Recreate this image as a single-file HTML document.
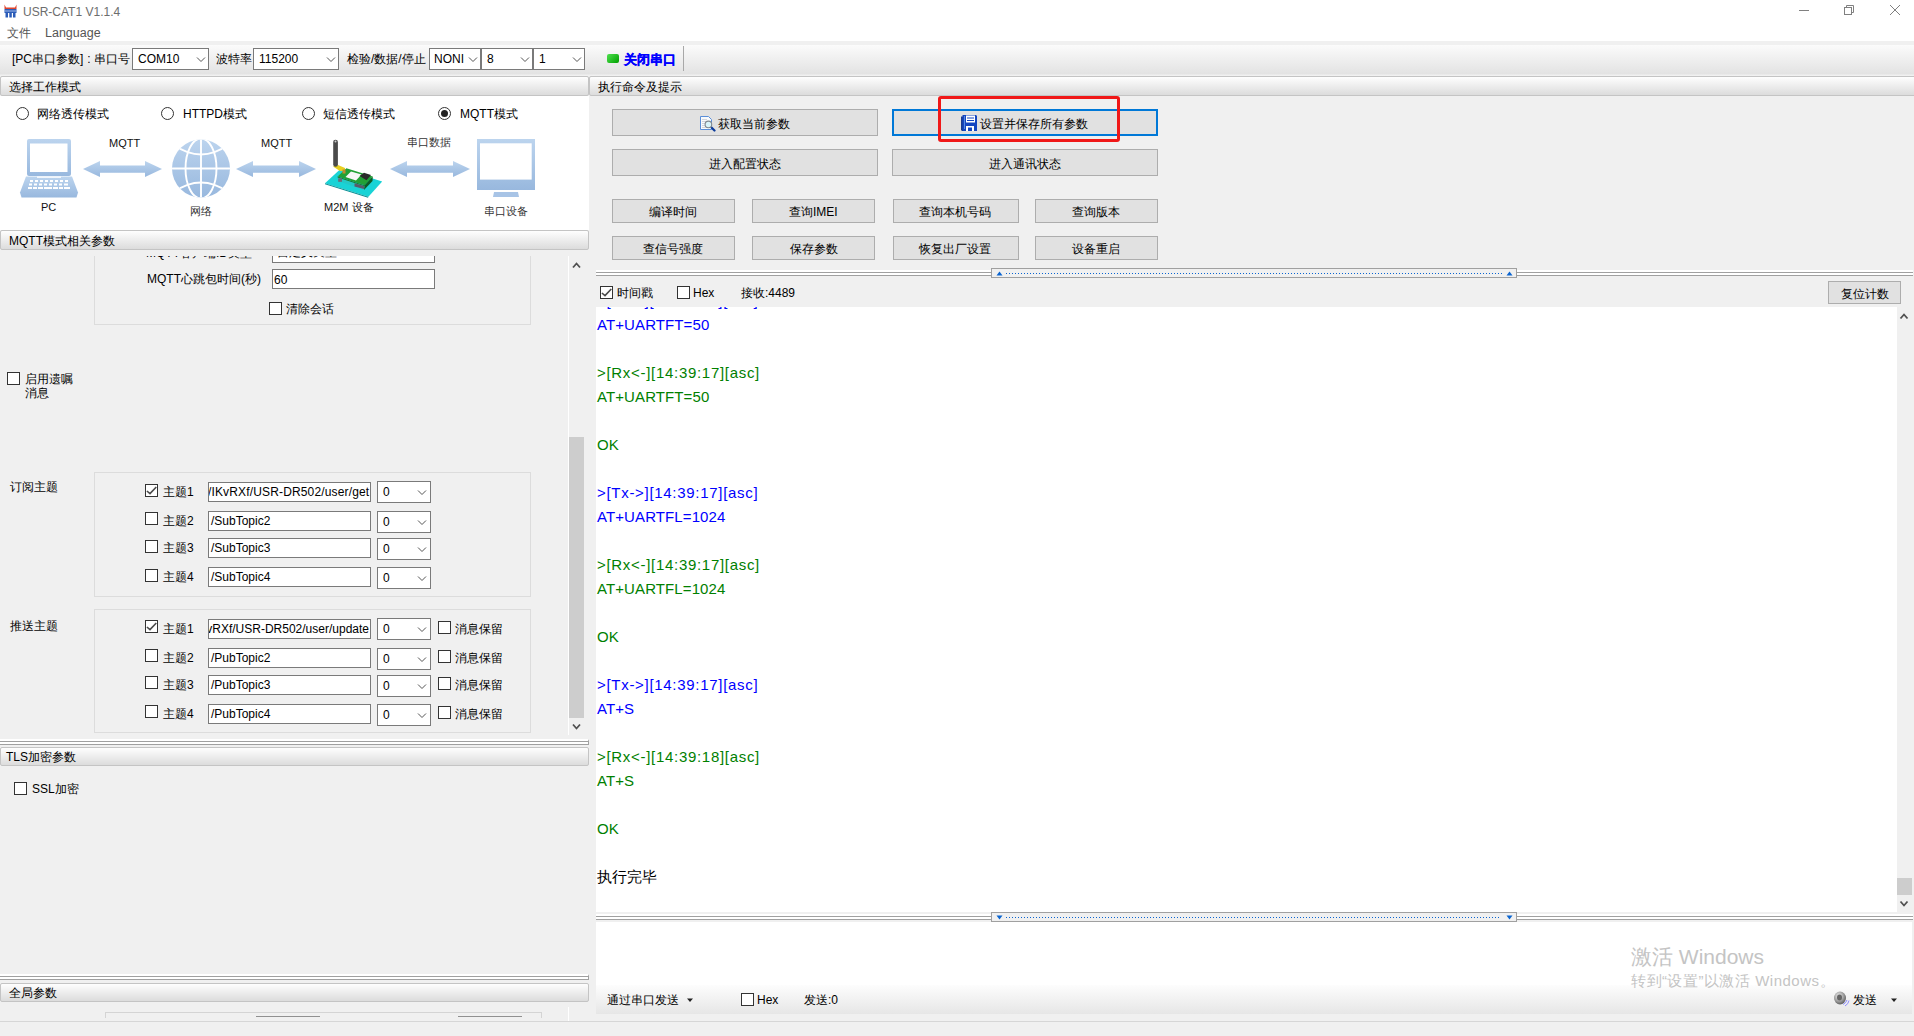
<!DOCTYPE html>
<html><head><meta charset="utf-8">
<style>
*{box-sizing:border-box;margin:0;padding:0}
html,body{width:1914px;height:1036px;overflow:hidden;background:#f0f0f0;font-family:"Liberation Sans",sans-serif;font-size:12px;color:#000}
.a{position:absolute}
.t{position:absolute;white-space:nowrap;line-height:1}
.hdr{position:absolute;height:19px;background:linear-gradient(#fefefe,#dcdcdc);border:1px solid #c4c4c4;border-radius:2px}
.btn{position:absolute;background:#e1e1e1;border:1px solid #adadad;text-align:center;font-size:12px}
.cb{position:absolute;width:13px;height:13px;border:1px solid #333;background:#fff}
.inp{position:absolute;background:#fff;border:1px solid #7a7a7a}
.combo{position:absolute;background:#fff;border:1px solid #7a7a7a}
.grp{position:absolute;border:1px solid #dcdcdc}
.split{position:absolute;height:4px;border-top:1px solid #a0a0a0;border-bottom:1px solid #a0a0a0;background:#fff}
.log{position:absolute;left:597px;font-size:15px;line-height:1;white-space:nowrap;letter-spacing:0.1px}
.ts{letter-spacing:0.7px}
.b{color:#0000ff}.g{color:#008000}
</style></head><body>
<!-- title bar -->
<div class="a" style="left:0;top:0;width:1914px;height:41px;background:#fff"></div>
<div id="title" class="t" style="left:23px;top:6px;font-size:12px;color:#6d6d6d">USR-CAT1 V1.1.4</div>
<svg class="a" style="left:4px;top:4px" width="13" height="14" viewBox="0 0 13 14"><path d="M0.5 0.5L2 3.5H11L12.5 0.5V5H0.5Z" fill="#e0442c"/><rect x="0.5" y="5" width="12" height="4" fill="#2b5cb8"/><rect x="1.5" y="9" width="2.5" height="4.5" fill="#2b5cb8"/><rect x="5.3" y="9" width="2.5" height="4.5" fill="#2b5cb8"/><rect x="9" y="9" width="2.5" height="4.5" fill="#2b5cb8"/><rect x="1" y="6.5" width="11" height="1" fill="#9fb8e8"/></svg>
<svg class="a" style="left:1795px;top:4px" width="110" height="14"><path d="M4 6.5H14" stroke="#808080" stroke-width="1"/><rect x="49.5" y="3.5" width="7" height="7" fill="none" stroke="#808080"/><path d="M51.5 3.5V1.5H58.5V8.5H56.5" fill="none" stroke="#808080"/><path d="M95 1L105 11M105 1L95 11" stroke="#808080" stroke-width="1"/></svg>
<div id="menu1" class="t" style="left:7px;top:27px;font-size:12px;color:#555">文件</div>
<div id="menu2" class="t" style="left:45px;top:27px;font-size:12.5px;color:#555">Language</div>

<!-- toolbar -->
<div class="a" style="left:0;top:45px;width:1914px;height:31px;background:linear-gradient(#fbfbfb,#e3e3e3 92%,#f4f4f4)"></div>

<div class="t" style="left:12px;top:53px;font-size:12px">[PC串口参数]<span style="padding:0 3px 0 4px">:</span>串口号</div>
<div class="combo" style="left:132px;top:48px;width:77px;height:22px"><span class="t" style="left:5px;top:4px;font-size:12px">COM10</span><svg class="a" style="left:63px;top:7px" width="10" height="7"><path d="M1 1.5L5 5.5L9 1.5" fill="none" stroke="#555" stroke-width="1"/></svg></div>
<div class="t" style="left:216px;top:53px">波特率</div>
<div class="combo" style="left:253px;top:48px;width:86px;height:22px"><span class="t" style="left:5px;top:4px">115200</span><svg class="a" style="left:72px;top:7px" width="10" height="7"><path d="M1 1.5L5 5.5L9 1.5" fill="none" stroke="#555" stroke-width="1"/></svg></div>
<div class="t" style="left:347px;top:53px">检验/数据/停止</div>
<div class="combo" style="left:429px;top:48px;width:52px;height:22px"><span class="t" style="left:4px;top:4px">NONI</span><svg class="a" style="left:38px;top:7px" width="10" height="7"><path d="M1 1.5L5 5.5L9 1.5" fill="none" stroke="#555" stroke-width="1"/></svg></div>
<div class="combo" style="left:481px;top:48px;width:52px;height:22px"><span class="t" style="left:5px;top:4px">8</span><svg class="a" style="left:38px;top:7px" width="10" height="7"><path d="M1 1.5L5 5.5L9 1.5" fill="none" stroke="#555" stroke-width="1"/></svg></div>
<div class="combo" style="left:533px;top:48px;width:52px;height:22px"><span class="t" style="left:5px;top:4px">1</span><svg class="a" style="left:38px;top:7px" width="10" height="7"><path d="M1 1.5L5 5.5L9 1.5" fill="none" stroke="#555" stroke-width="1"/></svg></div>
<div class="a" style="left:607px;top:54px;width:12px;height:9px;border-radius:2px;background:linear-gradient(135deg,#50e050,#00a000)"></div>
<div class="t" style="left:624px;top:53px;font-size:13px;font-weight:bold;-webkit-text-stroke:0.3px #0000ff;color:#0000ff">关闭串口</div>
<div class="a" style="left:683px;top:46px;width:1px;height:25px;background:#a8a8a8"></div>

<!-- left panel headers -->
<div class="hdr" style="left:0;top:76px;width:589px;height:20px"></div>
<div class="t" style="left:9px;top:81px">选择工作模式</div>
<div class="a" style="left:0;top:96px;width:589px;height:134px;background:#fff"></div>
<!-- radios -->
<div class="a" style="left:16px;top:107px;width:13px;height:13px;border:1px solid #333;border-radius:50%;background:#fff"></div>
<div class="t" style="left:37px;top:108px">网络透传模式</div>
<div class="a" style="left:161px;top:107px;width:13px;height:13px;border:1px solid #333;border-radius:50%;background:#fff"></div>
<div class="t" style="left:183px;top:108px">HTTPD模式</div>
<div class="a" style="left:302px;top:107px;width:13px;height:13px;border:1px solid #333;border-radius:50%;background:#fff"></div>
<div class="t" style="left:323px;top:108px">短信透传模式</div>
<div class="a" style="left:438px;top:107px;width:13px;height:13px;border:1px solid #333;border-radius:50%;background:#fff"><div class="a" style="left:2px;top:2px;width:7px;height:7px;border-radius:50%;background:#222"></div></div>
<div class="t" style="left:460px;top:108px">MQTT模式</div>
<!-- diagram -->
<svg class="a" style="left:0;top:96px" width="588" height="134" viewBox="0 96 588 134">
<defs><linearGradient id="lb" x1="0" y1="0" x2="0" y2="1"><stop offset="0" stop-color="#bcd4ee"/><stop offset="1" stop-color="#98b8de"/></linearGradient></defs>
<!-- laptop -->
<rect x="27" y="139" width="44" height="37" rx="2" fill="url(#lb)"/>
<rect x="30" y="143.5" width="37.5" height="28.5" fill="#fff"/>
<path d="M26 176.5H72L78 192.5L76.5 197.5H21.5L20 192.5Z" fill="url(#lb)"/>
<path d="M37 176.5H61V177.8H37Z" fill="#fff"/>
<g fill="#fff"><rect x="30" y="180" width="3" height="2"/><rect x="35" y="180" width="3" height="2"/><rect x="40" y="180" width="3" height="2"/><rect x="45" y="180" width="3" height="2"/><rect x="50" y="180" width="3" height="2"/><rect x="55" y="180" width="3" height="2"/><rect x="60" y="180" width="3" height="2"/><rect x="65" y="180" width="3" height="2"/>
<rect x="29" y="183.5" width="3" height="2"/><rect x="34" y="183.5" width="3" height="2"/><rect x="39" y="183.5" width="3" height="2"/><rect x="44" y="183.5" width="3" height="2"/><rect x="49" y="183.5" width="3" height="2"/><rect x="54" y="183.5" width="3" height="2"/><rect x="59" y="183.5" width="3" height="2"/><rect x="64" y="183.5" width="4" height="2"/>
<rect x="28" y="187" width="4" height="2"/><rect x="33" y="187" width="4" height="2"/><rect x="38" y="187" width="5" height="2"/><rect x="44" y="187" width="8" height="2"/><rect x="53" y="187" width="5" height="2"/><rect x="59" y="187" width="4" height="2"/><rect x="64" y="187" width="6" height="2"/></g>
<!-- arrows -->
<path d="M83 169L100 161V165.5H145V161L162 169L145 177V172.8H100V177Z" fill="url(#lb)"/>
<path d="M236 169L253 161V165.5H299V161L316 169L299 177V172.8H253V177Z" fill="url(#lb)"/>
<path d="M390 169L407 161V165.5H453V161L470 169L453 177V172.8H407V177Z" fill="url(#lb)"/>
<!-- globe -->
<clipPath id="gc"><circle cx="201" cy="168.5" r="29"/></clipPath>
<circle cx="201" cy="168.5" r="29" fill="url(#lb)"/>
<g clip-path="url(#gc)" fill="none" stroke="#fff" stroke-width="1.9">
<path d="M201 138V200"/><path d="M171 168.5H231"/>
<ellipse cx="201" cy="168.5" rx="15.5" ry="30"/>
<path d="M174 145Q201 164 228 145"/><path d="M174 192Q201 173 228 192"/>
</g>
<!-- M2M device -->
<path d="M325 183.3L341 168.5L382.2 181.5L368.4 196.8Z" fill="#19d3d6"/>
<path d="M325 183.3L368.4 196.8L368 197.8L325 184.3Z" fill="#0b8f95"/>
<path d="M337.6 176.4L346.4 168.3L372.8 176.4L364.6 185.2Z" fill="#22a035"/>
<path d="M337.6 176.4L364.6 185.2L364 190L338 181Z" fill="#22c8c8"/><path d="M337.6 176.4L364.6 185.2L364.6 186.2L337.6 177.4Z" fill="#1a7a2a"/>
<path d="M364.6 185.2L372.8 176.4L372.5 181L364 190Z" fill="#0e5a24"/>
<path d="M345.5 177L351 171.5L361.5 174.5L356 180.5Z" fill="#f6f6f6"/>
<path d="M359.6 176L364 172.7L371 175L366.5 180.2Z" fill="#2a2a2a"/>
<rect x="338.2" y="178.3" width="3.8" height="3.5" fill="#6a6a7a"/>
<path d="M354.5 183.3L364 186V189L354.5 186.5Z" fill="#5a5a6a"/>
<path d="M333 166.5L338 165L345 168L345 170.8L340 171Z" fill="#e8d020"/>
<rect x="342.5" y="169.5" width="3" height="4" fill="#c08a30"/>
<rect x="333.2" y="139.7" width="4.7" height="27" rx="2.3" fill="#4a4a4a"/>
<circle cx="335.5" cy="141.5" r="1" fill="#cfcfcf"/>
<!-- monitor -->
<rect x="477" y="139" width="58" height="51" fill="url(#lb)"/>
<rect x="480" y="143.3" width="51.7" height="36.3" fill="#fff"/>
<path d="M494 192H518L519 197H493Z" fill="#a8c4e6"/>
</svg>
<div class="t" style="left:109px;top:138px;font-size:11px;color:#111">MQTT</div>
<div class="t" style="left:261px;top:138px;font-size:11px;color:#111">MQTT</div>
<div class="t" style="left:407px;top:137px;font-size:11px;color:#333;font-family:'Liberation Serif',serif">串口数据</div>
<div class="t" style="left:41px;top:202px;font-size:11px;color:#111">PC</div>
<div class="t" style="left:190px;top:206px;font-size:11px;color:#333;font-family:'Liberation Serif',serif">网络</div>
<div class="t" style="left:324px;top:202px;font-size:11px;color:#111">M2M 设备</div>
<div class="t" style="left:484px;top:206px;font-size:11px;color:#333;font-family:'Liberation Serif',serif">串口设备</div>

<div class="hdr" style="left:0;top:230px;width:589px;height:20px"></div>
<div class="t" style="left:9px;top:235px">MQTT模式相关参数</div>

<!-- MQTT params scroll viewport -->
<div class="a" style="left:0;top:256px;width:568px;height:484px;overflow:hidden"><div class="a" style="left:0;top:-256px;width:568px;height:1036px">
<div class="grp" style="left:94px;top:150px;width:437px;height:175px"></div>
<div class="t" style="left:146px;top:247px">MQTT客户端ID类型</div>
<div class="inp" style="left:272px;top:243px;width:163px;height:20px"><span class="t" style="left:4px;top:2px">自定义类型</span></div>
<div class="t" style="left:147px;top:273px">MQTT心跳包时间(秒)</div>
<div class="inp" style="left:272px;top:269px;width:163px;height:20px"><span class="t" style="left:1px;top:4px">60</span></div>
<div class="cb" style="left:269px;top:302px"></div>
<div class="t" style="left:286px;top:303px">清除会话</div>

<div class="cb" style="left:7px;top:372px"></div>
<div class="t" style="left:25px;top:373px">启用遗嘱</div>
<div class="t" style="left:25px;top:387px">消息</div>

<div class="t" style="left:10px;top:481px">订阅主题</div>
<div class="grp" style="left:94px;top:472px;width:437px;height:125px"></div>
<div class="t" style="left:10px;top:620px">推送主题</div>
<div class="grp" style="left:94px;top:609px;width:437px;height:124px"></div>
<div class="cb" style="left:145px;top:484px"><svg class="a" style="left:0;top:0" width="11" height="11"><path d="M0.9 6L4 8.6L10.3 2" fill="none" stroke="#4a4a4a" stroke-width="1.6"/></svg></div>
<div class="t" style="left:163px;top:486px">主题1</div>
<div class="inp" style="left:208px;top:482px;width:163px;height:20px;overflow:hidden"><span class="t tp" style="left:-1px;top:3px;letter-spacing:0.15px">/IKvRXf/USR-DR502/user/get</span></div>
<div class="combo" style="left:377px;top:481px;width:54px;height:22px"><span class="t" style="left:5px;top:4px">0</span><svg class="a" style="left:39px;top:7px" width="10" height="7"><path d="M1 1.5L5 5.5L9 1.5" fill="none" stroke="#555" stroke-width="1"/></svg></div>
<div class="cb" style="left:145px;top:512px"></div>
<div class="t" style="left:163px;top:515px">主题2</div>
<div class="inp" style="left:208px;top:511px;width:163px;height:20px;overflow:hidden"><span class="t tp" style="left:2px;top:3px">/SubTopic2</span></div>
<div class="combo" style="left:377px;top:511px;width:54px;height:22px"><span class="t" style="left:5px;top:4px">0</span><svg class="a" style="left:39px;top:7px" width="10" height="7"><path d="M1 1.5L5 5.5L9 1.5" fill="none" stroke="#555" stroke-width="1"/></svg></div>
<div class="cb" style="left:145px;top:540px"></div>
<div class="t" style="left:163px;top:542px">主题3</div>
<div class="inp" style="left:208px;top:538px;width:163px;height:20px;overflow:hidden"><span class="t tp" style="left:2px;top:3px">/SubTopic3</span></div>
<div class="combo" style="left:377px;top:538px;width:54px;height:22px"><span class="t" style="left:5px;top:4px">0</span><svg class="a" style="left:39px;top:7px" width="10" height="7"><path d="M1 1.5L5 5.5L9 1.5" fill="none" stroke="#555" stroke-width="1"/></svg></div>
<div class="cb" style="left:145px;top:569px"></div>
<div class="t" style="left:163px;top:571px">主题4</div>
<div class="inp" style="left:208px;top:567px;width:163px;height:20px;overflow:hidden"><span class="t tp" style="left:2px;top:3px">/SubTopic4</span></div>
<div class="combo" style="left:377px;top:567px;width:54px;height:22px"><span class="t" style="left:5px;top:4px">0</span><svg class="a" style="left:39px;top:7px" width="10" height="7"><path d="M1 1.5L5 5.5L9 1.5" fill="none" stroke="#555" stroke-width="1"/></svg></div>
<div class="cb" style="left:145px;top:620px"><svg class="a" style="left:0;top:0" width="11" height="11"><path d="M0.9 6L4 8.6L10.3 2" fill="none" stroke="#4a4a4a" stroke-width="1.6"/></svg></div>
<div class="t" style="left:163px;top:623px">主题1</div>
<div class="inp" style="left:208px;top:619px;width:163px;height:20px;overflow:hidden"><span class="t tp" style="right:1px;top:3px">KvRXf/USR-DR502/user/update</span></div>
<div class="combo" style="left:377px;top:618px;width:54px;height:22px"><span class="t" style="left:5px;top:4px">0</span><svg class="a" style="left:39px;top:7px" width="10" height="7"><path d="M1 1.5L5 5.5L9 1.5" fill="none" stroke="#555" stroke-width="1"/></svg></div>
<div class="cb" style="left:438px;top:621px"></div>
<div class="t" style="left:455px;top:623px">消息保留</div>
<div class="cb" style="left:145px;top:649px"></div>
<div class="t" style="left:163px;top:652px">主题2</div>
<div class="inp" style="left:208px;top:648px;width:163px;height:20px;overflow:hidden"><span class="t tp" style="left:2px;top:3px">/PubTopic2</span></div>
<div class="combo" style="left:377px;top:648px;width:54px;height:22px"><span class="t" style="left:5px;top:4px">0</span><svg class="a" style="left:39px;top:7px" width="10" height="7"><path d="M1 1.5L5 5.5L9 1.5" fill="none" stroke="#555" stroke-width="1"/></svg></div>
<div class="cb" style="left:438px;top:650px"></div>
<div class="t" style="left:455px;top:652px">消息保留</div>
<div class="cb" style="left:145px;top:676px"></div>
<div class="t" style="left:163px;top:679px">主题3</div>
<div class="inp" style="left:208px;top:675px;width:163px;height:20px;overflow:hidden"><span class="t tp" style="left:2px;top:3px">/PubTopic3</span></div>
<div class="combo" style="left:377px;top:675px;width:54px;height:22px"><span class="t" style="left:5px;top:4px">0</span><svg class="a" style="left:39px;top:7px" width="10" height="7"><path d="M1 1.5L5 5.5L9 1.5" fill="none" stroke="#555" stroke-width="1"/></svg></div>
<div class="cb" style="left:438px;top:677px"></div>
<div class="t" style="left:455px;top:679px">消息保留</div>
<div class="cb" style="left:145px;top:705px"></div>
<div class="t" style="left:163px;top:708px">主题4</div>
<div class="inp" style="left:208px;top:704px;width:163px;height:20px;overflow:hidden"><span class="t tp" style="left:2px;top:3px">/PubTopic4</span></div>
<div class="combo" style="left:377px;top:704px;width:54px;height:22px"><span class="t" style="left:5px;top:4px">0</span><svg class="a" style="left:39px;top:7px" width="10" height="7"><path d="M1 1.5L5 5.5L9 1.5" fill="none" stroke="#555" stroke-width="1"/></svg></div>
<div class="cb" style="left:438px;top:706px"></div>
<div class="t" style="left:455px;top:708px">消息保留</div>
</div></div>
<!-- left scrollbar -->
<div class="a" style="left:568px;top:256px;width:1px;height:479px;background:#fff"></div>
<svg class="a" style="left:572px;top:261px" width="9" height="8"><path d="M1 6.5L4.5 2.5L8 6.5" fill="none" stroke="#505050" stroke-width="1.8"/></svg>
<div class="a" style="left:569px;top:437px;width:15px;height:281px;background:#cdcdcd"></div>
<svg class="a" style="left:572px;top:723px" width="9" height="8"><path d="M1 1.5L4.5 5.5L8 1.5" fill="none" stroke="#505050" stroke-width="1.8"/></svg>
<!-- left splitters -->
<div class="a" style="left:0;top:739px;width:589px;height:6px;border-top:2px solid #fff;border-bottom:1px solid #a0a0a0;background:#fff;border-right:1px solid #a0a0a0"><div class="a" style="left:0;top:0;width:588px;height:1px;background:#a0a0a0"></div></div>
<div class="hdr" style="left:0;top:747px;width:589px"></div>
<div class="t" style="left:6px;top:751px">TLS加密参数</div>
<div class="cb" style="left:14px;top:782px"></div>
<div class="t" style="left:32px;top:783px">SSL加密</div>
<div class="a" style="left:0;top:974px;width:589px;height:6px;border-top:2px solid #fff;border-bottom:1px solid #a0a0a0;background:#fff;border-right:1px solid #a0a0a0"><div class="a" style="left:0;top:0;width:588px;height:1px;background:#a0a0a0"></div></div>
<div class="hdr" style="left:0;top:983px;width:589px"></div>
<div class="t" style="left:9px;top:987px">全局参数</div>
<div class="a" style="left:105px;top:1012px;width:437px;height:6px;border:1px solid #d4d4d4;border-bottom:none"></div>
<div class="a" style="left:256px;top:1016px;width:64px;height:1px;background:#909090"></div>
<div class="a" style="left:458px;top:1016px;width:64px;height:1px;background:#909090"></div>
<div class="a" style="left:568px;top:1007px;width:1px;height:14px;background:#fff"></div>

<!-- right panel header -->
<div class="hdr" style="left:589px;top:76px;width:1330px;height:20px"></div>
<div class="t" style="left:598px;top:81px">执行命令及提示</div>

<!-- buttons -->
<div class="btn" style="left:612px;top:109px;width:266px;height:27px"></div>
<svg class="a" style="left:699px;top:115px" width="17" height="17" viewBox="0 0 17 17"><path d="M1.5 1.5H9.5L12.5 4.5V14.5H1.5Z" fill="#f8fafc" stroke="#5a8ed8"/><path d="M3 4.5H8M3 6.5H10M3 8.5H6M3 10.5H6M3 12.5H6" stroke="#c8ccd4" stroke-width="0.8"/><path d="M12.5 12.5L15.5 15.5" stroke="#0b3a9a" stroke-width="2.2" stroke-linecap="round"/><circle cx="9.4" cy="9.4" r="3.3" fill="#d8f4fa" stroke="#808890" stroke-width="1.1"/></svg>
<div class="t" style="left:718px;top:118px">获取当前参数</div>
<div class="btn" style="left:892px;top:109px;width:266px;height:27px;border:2px solid #0078d7"></div>
<svg class="a" style="left:961px;top:115px" width="17" height="17" viewBox="0 0 17 17"><path d="M0 1.5H2V15H15V16H1L0 15Z" fill="#1a3a90"/><path d="M1.5 0H15L16 1V16H2.5L1.5 15Z" fill="#1446c0"/><path d="M3 1H4V14H3Z" fill="#5a8ae0"/><rect x="5" y="0.5" width="9" height="7" fill="#fff"/><path d="M6 3H13M6 5.5H13" stroke="#1446c0" stroke-width="1"/><rect x="5" y="11" width="8" height="5" fill="#fff"/><rect x="7" y="12.5" width="4" height="3.5" fill="#1446c0"/></svg>
<div class="t" style="left:980px;top:118px">设置并保存所有参数</div>
<div class="a" style="left:938px;top:96px;width:182px;height:46px;border:3px solid #f01818;border-radius:3px"></div>
<div class="btn" style="left:612px;top:149px;width:266px;height:27px"></div>
<div class="t" style="left:709px;top:158px">进入配置状态</div>
<div class="btn" style="left:892px;top:149px;width:266px;height:27px"></div>
<div class="t" style="left:989px;top:158px">进入通讯状态</div>
<div class="btn" style="left:612px;top:199px;width:123px;height:24px"></div>
<div class="t" style="left:649px;top:206px">编译时间</div>
<div class="btn" style="left:752px;top:199px;width:123px;height:24px"></div>
<div class="t" style="left:789px;top:206px">查询IMEI</div>
<div class="btn" style="left:893px;top:199px;width:126px;height:24px"></div>
<div class="t" style="left:919px;top:206px">查询本机号码</div>
<div class="btn" style="left:1035px;top:199px;width:123px;height:24px"></div>
<div class="t" style="left:1072px;top:206px">查询版本</div>
<div class="btn" style="left:612px;top:236px;width:123px;height:24px"></div>
<div class="t" style="left:643px;top:243px">查信号强度</div>
<div class="btn" style="left:752px;top:236px;width:123px;height:24px"></div>
<div class="t" style="left:790px;top:243px">保存参数</div>
<div class="btn" style="left:893px;top:236px;width:126px;height:24px"></div>
<div class="t" style="left:919px;top:243px">恢复出厂设置</div>
<div class="btn" style="left:1035px;top:236px;width:123px;height:24px"></div>
<div class="t" style="left:1072px;top:243px">设备重启</div>

<!-- top splitter -->
<div class="a" style="left:596px;top:270px;width:1317px;height:2px;background:#fff"></div>
<div class="a" style="left:596px;top:272px;width:1317px;height:4px;background:#fff;border-top:1px solid #a0a0a0;border-bottom:1px solid #a0a0a0"></div>
<div class="a" style="left:991px;top:268px;width:526px;height:10px;background:#f0f0f0;border:1px solid #a0a0a0"></div>
<svg class="a" style="left:996px;top:271px" width="8" height="5"><path d="M0.5 4.5L3.5 0.5L6.5 4.5Z" fill="#0a64d0"/></svg>
<svg class="a" style="left:1506px;top:271px" width="8" height="5"><path d="M0.5 4.5L3.5 0.5L6.5 4.5Z" fill="#0a64d0"/></svg>
<div class="a" style="left:1006px;top:273px;width:496px;height:1px;background-image:linear-gradient(90deg,#0a64d0 1px,transparent 1px);background-size:3px 1px"></div>

<!-- checkbox row -->
<div class="cb" style="left:600px;top:286px"><svg class="a" style="left:0;top:0" width="11" height="11"><path d="M0.9 6L4 8.6L10.3 2" fill="none" stroke="#4a4a4a" stroke-width="1.6"/></svg></div>
<div class="t" style="left:617px;top:287px">时间戳</div>
<div class="cb" style="left:677px;top:286px"></div>
<div class="t" style="left:693px;top:287px">Hex</div>
<div class="t" style="left:741px;top:287px">接收:4489</div>
<div class="btn" style="left:1828px;top:281px;width:73px;height:23px"></div>
<div class="t" style="left:1841px;top:288px">复位计数</div>

<!-- log area -->
<div class="a" style="left:596px;top:307px;width:1301px;height:605px;background:#fff"></div>
<div class="a" style="left:596px;top:307px;width:1301px;height:605px;overflow:hidden"><div class="a" style="left:-596px;top:-307px;width:1914px;height:1036px">
<div class="log b ts" style="top:293px">&gt;[Tx-&gt;][14:39:17][asc]</div>
<div class="log b" style="top:317px">AT+UARTFT=50</div>
<div class="log g ts" style="top:365px">&gt;[Rx&lt;-][14:39:17][asc]</div>
<div class="log g" style="top:389px">AT+UARTFT=50</div>
<div class="log g" style="top:437px">OK</div>
<div class="log b ts" style="top:485px">&gt;[Tx-&gt;][14:39:17][asc]</div>
<div class="log b" style="top:509px">AT+UARTFL=1024</div>
<div class="log g ts" style="top:557px">&gt;[Rx&lt;-][14:39:17][asc]</div>
<div class="log g" style="top:581px">AT+UARTFL=1024</div>
<div class="log g" style="top:629px">OK</div>
<div class="log b ts" style="top:677px">&gt;[Tx-&gt;][14:39:17][asc]</div>
<div class="log b" style="top:701px">AT+S</div>
<div class="log g ts" style="top:749px">&gt;[Rx&lt;-][14:39:18][asc]</div>
<div class="log g" style="top:773px">AT+S</div>
<div class="log g" style="top:821px">OK</div>
<div class="log" style="top:869px;color:#000">执行完毕</div>
</div></div>
<!-- log scrollbar -->
<div class="a" style="left:1897px;top:307px;width:15px;height:605px;background:#f0f0f0"></div>
<svg class="a" style="left:1899px;top:312px" width="11" height="8"><path d="M1.5 6.5L5 2.5L8.5 6.5" fill="none" stroke="#505050" stroke-width="1.8"/></svg>
<div class="a" style="left:1897px;top:878px;width:15px;height:17px;background:#cdcdcd"></div>
<svg class="a" style="left:1899px;top:900px" width="11" height="8"><path d="M1.5 1.5L5 5.5L8.5 1.5" fill="none" stroke="#505050" stroke-width="1.8"/></svg>
<!-- bottom splitter -->
<div class="a" style="left:596px;top:912px;width:1317px;height:10px;background:#f0f0f0"></div><div class="a" style="left:596px;top:914px;width:1317px;height:2px;background:#fff"></div><div class="a" style="left:596px;top:916px;width:1317px;height:4px;background:#fff;border-top:1px solid #a0a0a0;border-bottom:1px solid #a0a0a0"></div>
<div class="a" style="left:991px;top:912px;width:526px;height:10px;background:#f0f0f0;border:1px solid #a0a0a0"></div>
<svg class="a" style="left:996px;top:915px" width="8" height="5"><path d="M0.5 0.5L3.5 4.5L6.5 0.5Z" fill="#0a64d0"/></svg>
<svg class="a" style="left:1506px;top:915px" width="8" height="5"><path d="M0.5 0.5L3.5 4.5L6.5 0.5Z" fill="#0a64d0"/></svg>
<div class="a" style="left:1006px;top:917px;width:494px;height:1px;background-image:linear-gradient(90deg,#0a64d0 1px,transparent 1px);background-size:3px 1px"></div>
<div class="a" style="left:596px;top:922px;width:1316px;height:63px;background:#fff"></div>
<div class="a" style="left:596px;top:985px;width:1316px;height:29px;background:linear-gradient(#fdfdfd,#e6e6e6)"></div>
<div class="a" style="left:0;top:1021px;width:1914px;height:1px;background:#d6d6d6"></div>
<div class="t" style="left:607px;top:994px">通过串口发送</div>
<svg class="a" style="left:687px;top:998px" width="7" height="5"><path d="M0 0.5H6L3 4Z" fill="#222"/></svg>
<div class="cb" style="left:741px;top:993px"></div>
<div class="t" style="left:757px;top:994px">Hex</div>
<div class="t" style="left:804px;top:994px">发送:0</div>
<div class="t" style="left:1631px;top:946px;font-size:21px;color:#c4c4c4">激活 Windows</div>
<div class="t" style="left:1631px;top:973px;font-size:15px;letter-spacing:0.5px;color:#c4c4c4">转到“设置”以激活 Windows。</div>
<svg class="a" style="left:1833px;top:991px" width="17" height="16" viewBox="0 0 17 16"><defs><radialGradient id="sp" cx="0.4" cy="0.35" r="0.7"><stop offset="0" stop-color="#f4f4f4"/><stop offset="0.6" stop-color="#9a9a9a"/><stop offset="1" stop-color="#555"/></radialGradient></defs><ellipse cx="7" cy="7" rx="6" ry="6.5" fill="url(#sp)"/><ellipse cx="6.5" cy="6.5" rx="2.5" ry="3" fill="#666"/><path d="M10 13.5Q13 12 14 9M12 15Q15.5 13 16 9.5" fill="none" stroke="#8080ff" stroke-width="0.9"/></svg>
<div class="t" style="left:1853px;top:994px">发送</div>
<svg class="a" style="left:1891px;top:998px" width="7" height="5"><path d="M0 0.5H6L3 4Z" fill="#222"/></svg>

</body></html>
